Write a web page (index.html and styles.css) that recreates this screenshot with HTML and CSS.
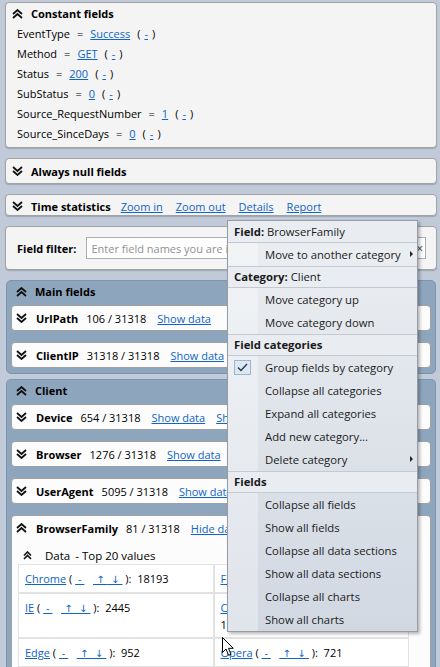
FILE: index.html
```html
<!DOCTYPE html>
<html>
<head>
<meta charset="utf-8">
<link rel="stylesheet" href="styles.css">
</head>
<body>
<div class="page">
  <section class="panel const">
    <div class="phead">
      <svg class="chev" width="11" height="10" viewBox="0 0 11 10"><path d="M1 5 L5.5 1 L10 5 M1 9 L5.5 5 L10 9"/></svg>
      <b>Constant fields</b>
    </div>
    <div class="kv"><span>EventType</span><span>=</span><a>Success</a><span class="par">(<a>-</a>)</span></div>
    <div class="kv"><span>Method</span><span>=</span><a>GET</a><span class="par">(<a>-</a>)</span></div>
    <div class="kv"><span>Status</span><span>=</span><a>200</a><span class="par">(<a>-</a>)</span></div>
    <div class="kv"><span>SubStatus</span><span>=</span><a>0</a><span class="par">(<a>-</a>)</span></div>
    <div class="kv"><span>Source_RequestNumber</span><span>=</span><a>1</a><span class="par">(<a>-</a>)</span></div>
    <div class="kv"><span>Source_SinceDays</span><span>=</span><a>0</a><span class="par">(<a>-</a>)</span></div>
  </section>

  <section class="panel bar null">
    <svg class="chev" width="11" height="10" viewBox="0 0 11 10"><path d="M1 1 L5.5 5 L10 1 M1 5 L5.5 9 L10 5"/></svg>
    <b>Always null fields</b>
  </section>

  <section class="panel bar time">
    <svg class="chev" width="11" height="10" viewBox="0 0 11 10"><path d="M1 1 L5.5 5 L10 1 M1 5 L5.5 9 L10 5"/></svg>
    <b>Time statistics</b>
    <a class="tl first">Zoom in</a><a class="tl">Zoom out</a><a class="tl">Details</a><a class="tl">Report</a>
  </section>

  <section class="panel filter">
    <b>Field filter:</b>
    <div class="input"><span class="ph">Enter field names you are interested in</span><span class="clear">×</span></div>
  </section>

  <section class="cat first">
    <div class="chead">
      <svg class="chev" width="11" height="10" viewBox="0 0 11 10"><path d="M1 5 L5.5 1 L10 5 M1 9 L5.5 5 L10 9"/></svg>
      <b>Main fields</b>
    </div>
    <div class="card">
      <div class="crow">
        <svg class="chev" width="11" height="10" viewBox="0 0 11 10"><path d="M1 1 L5.5 5 L10 1 M1 5 L5.5 9 L10 5"/></svg>
        <b>UrlPath</b><span class="cnt">106 / 31318</span><a class="lnk">Show data</a>
      </div>
    </div>
    <div class="card">
      <div class="crow">
        <svg class="chev" width="11" height="10" viewBox="0 0 11 10"><path d="M1 1 L5.5 5 L10 1 M1 5 L5.5 9 L10 5"/></svg>
        <b>ClientIP</b><span class="cnt">31318 / 31318</span><a class="lnk">Show data</a><a class="lnk">Show chart</a>
      </div>
    </div>
  </section>

  <section class="cat second">
    <div class="chead">
      <svg class="chev" width="11" height="10" viewBox="0 0 11 10"><path d="M1 5 L5.5 1 L10 5 M1 9 L5.5 5 L10 9"/></svg>
      <b>Client</b>
    </div>
    <div class="card">
      <div class="crow">
        <svg class="chev" width="11" height="10" viewBox="0 0 11 10"><path d="M1 1 L5.5 5 L10 1 M1 5 L5.5 9 L10 5"/></svg>
        <b>Device</b><span class="cnt">654 / 31318</span><a class="lnk">Show data</a><a class="lnk">Show chart</a>
      </div>
    </div>
    <div class="card">
      <div class="crow">
        <svg class="chev" width="11" height="10" viewBox="0 0 11 10"><path d="M1 1 L5.5 5 L10 1 M1 5 L5.5 9 L10 5"/></svg>
        <b>Browser</b><span class="cnt">1276 / 31318</span><a class="lnk">Show data</a><a class="lnk">Show chart</a>
      </div>
    </div>
    <div class="card">
      <div class="crow">
        <svg class="chev" width="11" height="10" viewBox="0 0 11 10"><path d="M1 1 L5.5 5 L10 1 M1 5 L5.5 9 L10 5"/></svg>
        <b>UserAgent</b><span class="cnt">5095 / 31318</span><a class="lnk">Show data</a><a class="lnk">Show chart</a>
      </div>
    </div>
    <div class="card open">
      <div class="crow">
        <svg class="chev" width="11" height="10" viewBox="0 0 11 10"><path d="M1 5 L5.5 1 L10 5 M1 9 L5.5 5 L10 9"/></svg>
        <b>BrowserFamily</b><span class="cnt">81 / 31318</span><a class="lnk">Hide data</a><a class="lnk">Show chart</a>
      </div>
      <div class="dhead">
        <svg class="chev small" width="9" height="9" viewBox="0 0 9 9"><path d="M1 4.5 L4.5 1 L8 4.5 M1 8 L4.5 4.5 L8 8"/></svg>
        <span>Data</span><span>- Top 20 values</span>
      </div>
      <div class="grid">
        <div class="cell"><a>Chrome</a> ( <a class="u">&nbsp;-&nbsp;</a>&nbsp;&nbsp; <a class="u ar">&nbsp;↑&nbsp;</a><a class="u ar">&nbsp;↓&nbsp;</a> ):&nbsp; 18193</div>
        <div class="cell"><a>Firefox</a> ( <a class="u">&nbsp;-&nbsp;</a>&nbsp;&nbsp; <a class="u ar">&nbsp;↑&nbsp;</a><a class="u ar">&nbsp;↓&nbsp;</a> ):&nbsp; 3154</div>
        <div class="cell"><a>IE</a> ( <a class="u">&nbsp;-&nbsp;</a>&nbsp;&nbsp; <a class="u ar">&nbsp;↑&nbsp;</a><a class="u ar">&nbsp;↓&nbsp;</a> ):&nbsp; 2445</div>
        <div class="cell"><a>Chrome Mobile</a> ( <a class="u">&nbsp;-&nbsp;</a>&nbsp;&nbsp; <a class="u ar">&nbsp;↑&nbsp;</a><a class="u ar">&nbsp;↓&nbsp;</a> ):<br>1873</div>
        <div class="cell"><a>Edge</a> ( <a class="u">&nbsp;-&nbsp;</a>&nbsp;&nbsp; <a class="u ar">&nbsp;↑&nbsp;</a><a class="u ar">&nbsp;↓&nbsp;</a> ):&nbsp; 952</div>
        <div class="cell"><a>Opera</a> ( <a class="u">&nbsp;-&nbsp;</a>&nbsp;&nbsp; <a class="u ar">&nbsp;↑&nbsp;</a><a class="u ar">&nbsp;↓&nbsp;</a> ):&nbsp; 721</div>
      </div>
    </div>
  </section>
</div>

<div class="menu">
  <div class="mh top"><b>Field:</b> BrowserFamily</div>
  <div class="mi"><span class="g"></span><span class="t">Move to another category</span><span class="sub"></span></div>
  <div class="mh"><b>Category:</b> Client</div>
  <div class="mi"><span class="g"></span><span class="t">Move category up</span></div>
  <div class="mi"><span class="g"></span><span class="t">Move category down</span></div>
  <div class="mh"><b>Field categories</b></div>
  <div class="mi"><span class="g"><span class="check"><svg width="11" height="9" viewBox="0 0 11 9"><path d="M1 4.5 L4 7.5 L10 1"/></svg></span></span><span class="t">Group fields by category</span></div>
  <div class="mi"><span class="g"></span><span class="t">Collapse all categories</span></div>
  <div class="mi"><span class="g"></span><span class="t">Expand all categories</span></div>
  <div class="mi"><span class="g"></span><span class="t">Add new category...</span></div>
  <div class="mi"><span class="g"></span><span class="t">Delete category</span><span class="sub"></span></div>
  <div class="mh"><b>Fields</b></div>
  <div class="mi"><span class="g"></span><span class="t">Collapse all fields</span></div>
  <div class="mi"><span class="g"></span><span class="t">Show all fields</span></div>
  <div class="mi"><span class="g"></span><span class="t">Collapse all data sections</span></div>
  <div class="mi"><span class="g"></span><span class="t">Show all data sections</span></div>
  <div class="mi"><span class="g"></span><span class="t">Collapse all charts</span></div>
  <div class="mi"><span class="g"></span><span class="t">Show all charts</span></div>
</div>

<svg class="cursor" width="13" height="20" viewBox="0 0 13 20"><path d="M0.5 0.5 L0.5 15.5 L4 12 L6.6 18.3 L9 17.3 L6.5 11.3 L11.3 11.3 Z"/></svg>
</body>
</html>
```

FILE: styles.css
```css
* { box-sizing: border-box; }
html, body { margin: 0; height: 100%; overflow: hidden; }
body {
  position: relative;
  background: #c0cad9;
  font-family: "Open Sans", "Noto Sans", sans-serif;
  font-size: 11px;
  color: #000;
}
b { font-weight: 700; }
a { color: #0f64c8; text-decoration: underline; }

.page { padding: 2px 3px 0 5px; }

.chev { flex: none; }
.chev path { fill: none; stroke: #111; stroke-width: 1.8; stroke-linejoin: miter; }
.chev.small path { stroke-width: 1.6; }

.panel {
  background: #f4f4f4;
  border: 1px solid #a2a2a2;
  border-radius: 4px;
  box-shadow: 0 1px 1px rgba(0,0,0,0.18);
}
.panel + .panel { margin-top: 10px; }

.const { padding: 1px 0 4px; }
.phead { height: 19px; display: flex; align-items: center; gap: 8px; padding-left: 6px; }
.kv { height: 20px; display: flex; align-items: center; gap: 7px; padding-left: 11px; }
.par { display: flex; gap: 4px; }

.bar { display: flex; align-items: center; padding-left: 6px; }
.bar .chev { margin-right: 8px; }
.null { height: 26px; }
.time { height: 22px; padding-top: 2px; }
.tl { margin-left: 13px; }
.tl.first { margin-left: 10px; }

.filter { height: 44px; display: flex; align-items: center; gap: 10px; padding: 0 10px 0 11px; }
.input {
  flex: 1; height: 22px; position: relative;
  background: #fff; border: 1px solid #abadb3;
  display: flex; align-items: center; padding-left: 4px;
}
.ph { color: #8f8f8f; white-space: nowrap; overflow: hidden; }
.clear { position: absolute; right: 2px; top: 2px; font-size: 12px; color: #333; }

.cat {
  background: #8ea6bd;
  border: 1px solid #7d95ad;
  border-radius: 5px;
  padding: 0 4px 5px;
  margin: 10px 1px 0 1px;
}
.cat.second { margin-top: 5px; padding-bottom: 0; border-bottom: none; border-radius: 5px 5px 0 0; }
.chead { height: 21px; display: flex; align-items: center; gap: 8px; padding-left: 5px; }

.card {
  background: #fcfcfc;
  border: 1px solid #a0a0a0;
  border-radius: 4px;
  margin-top: 3px;
}
.card + .card { margin-top: 11px; }
.crow { height: 24px; display: flex; align-items: center; padding-left: 4px; white-space: nowrap; overflow: hidden; }
.crow .chev { margin-right: 9px; }
.cnt { margin-left: 8px; }
.lnk { margin-left: 11px; }

.card.open { height: 200px; border-radius: 4px 4px 0 0; }
.dhead { height: 18px; margin-top: 6px; display: flex; align-items: center; padding-left: 11px; gap: 5px; font-size: 11.5px; }
.dhead .chev { margin-right: 8px; }

.grid {
  margin-left: 6px;
  width: 391px;
  display: grid;
  grid-template-columns: 1fr 1fr;
  gap: 2px;
  background: #e2e2e2;
  border: 1px solid #e2e2e2;
}
.cell { background: #fff; padding: 6px 6px 4px; line-height: 16px; }
.cell .u { white-space: pre; }
.cell .ar { font-family: "DejaVu Sans", sans-serif; font-size: 10px; }

.menu {
  position: absolute;
  left: 227px; top: 220px;
  width: 191px;
  border: 1px solid #979ca4;
  background: linear-gradient(#eceff2, #d1d8e2);
  box-shadow: 2px 2px 3px rgba(0,0,0,0.28);
  color: #1a1a1a;
  font-size: 11.3px;
}
.mh {
  height: 22px; line-height: 20px;
  padding-left: 6px;
  background: #e9ecf0;
  border-top: 1px solid #c6cad0;
  border-bottom: 1px solid #c6cad0;
}
.mh.top { border-top: none; height: 22px; line-height: 21px; }
.mh b { font-weight: 700; }
.mi { height: 23px; display: flex; align-items: center; position: relative; }
.mi .g { width: 30px; height: 23px; background: rgba(255,255,255,0.32); position: relative; flex: none; }
.mi .t { padding-left: 7px; }
.sub {
  position: absolute; right: 4px; top: 8px;
  width: 0; height: 0;
  border-left: 3px solid #222;
  border-top: 3px solid transparent;
  border-bottom: 3px solid transparent;
}
.check {
  position: absolute; left: 6px; top: 4px;
  width: 17px; height: 15px;
  background: #dde8f6;
  border: 1px solid #9db3cf;
  display: flex; align-items: center; justify-content: center;
}
.check path { fill: none; stroke: #2b3440; stroke-width: 1.3; }

.cursor { position: absolute; left: 222px; top: 637px; }
.cursor path { fill: #fff; stroke: #000; stroke-width: 1; }
```
